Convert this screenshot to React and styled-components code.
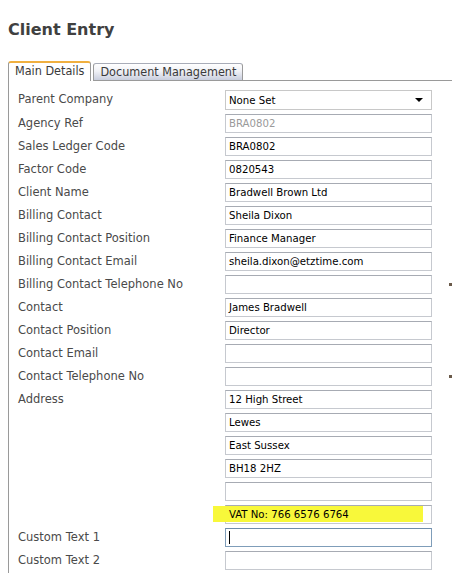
import React from "react";
import styled, { createGlobalStyle } from "styled-components";

const Global = createGlobalStyle`
  html, body { margin: 0; padding: 0; background: #fff; }
  body { width: 452px; height: 573px; overflow: hidden; }
`;

const fields = [
  { label: "Parent Company", select: "None Set" },
  { label: "Agency Ref", value: "BRA0802", disabled: true },
  { label: "Sales Ledger Code", value: "BRA0802" },
  { label: "Factor Code", value: "0820543" },
  { label: "Client Name", value: "Bradwell Brown Ltd" },
  { label: "Billing Contact", value: "Sheila Dixon" },
  { label: "Billing Contact Position", value: "Finance Manager" },
  { label: "Billing Contact Email", value: "sheila.dixon@etztime.com" },
  { label: "Billing Contact Telephone No", value: "", mark: true },
  { label: "Contact", value: "James Bradwell" },
  { label: "Contact Position", value: "Director" },
  { label: "Contact Email", value: "" },
  { label: "Contact Telephone No", value: "", mark: true },
];

const address = ["12 High Street", "Lewes", "East Sussex", "BH18 2HZ", ""];

const ClientEntry = () => {
  return (
    <Page>
      <Global />
      <Title>Client Entry</Title>
      <Tabs>
        <Tab active>Main Details</Tab>
        <Tab>Document Management</Tab>
        <TabFill />
      </Tabs>
      <Panel>
        <Form>
          {fields.map((f) => (
            <React.Fragment key={f.label}>
              <Label>{f.label}</Label>
              <Cell>
                {f.select ? (
                  <Select>
                    <span>{f.select}</span>
                    <Arrow />
                  </Select>
                ) : (
                  <Input disabled={f.disabled}>{f.value}</Input>
                )}
                {f.mark && <EdgeMark />}
              </Cell>
            </React.Fragment>
          ))}
          <Label top>Address</Label>
          <Stack>
            {address.map((a, i) => (
              <Input key={i}>{a}</Input>
            ))}
            <Input>
              <Highlight />
              <HighlightText>VAT No: 766 6576 6764</HighlightText>
            </Input>
          </Stack>
          <Label>Custom Text 1</Label>
          <Cell>
            <Input focused>
              <Caret />
            </Input>
          </Cell>
          <Label>Custom Text 2</Label>
          <Cell>
            <Input />
          </Cell>
        </Form>
      </Panel>
    </Page>
  );
};

export default ClientEntry;

const Page = styled.div`
  padding: 20px 0 0 8px;
  font-family: "DejaVu Sans", Verdana, sans-serif;
`;

const Title = styled.h1`
  margin: 0;
  font-size: 16px;
  line-height: 20px;
  font-weight: bold;
  color: #404040;
`;

const Tabs = styled.div`
  display: flex;
  align-items: flex-end;
  margin-top: 21px;
  height: 20px;
`;

const Tab = styled.div`
  box-sizing: border-box;
  height: ${(p) => (p.active ? "20px" : "18px")};
  padding: 0 ${(p) => (p.active ? "6px" : "6px")};
  margin-right: 2px;
  border: 1px solid #9a9a9a;
  border-top: ${(p) => (p.active ? "2px solid #f0b040" : "1px solid #a8acb8")};
  border-bottom: ${(p) => (p.active ? "none" : "1px solid #9a9a9a")};
  border-radius: 3px 3px 0 0;
  background: ${(p) =>
    p.active ? "#fff" : "linear-gradient(#ffffff, #f0f1f6 45%, #c9cede)"};
  font-family: "DejaVu Sans Condensed", "DejaVu Sans", sans-serif;
  font-size: 12.5px;
  line-height: 16px;
  color: #3a3a3a;
  white-space: nowrap;
`;

const TabFill = styled.div`
  flex: 1;
  border-bottom: 1px solid #9a9a9a;
  height: 0;
  margin-left: -2px;
`;

const Panel = styled.div`
  border-left: 1px solid #9a9a9a;
  padding: 9px 0 0 9px;
  height: 500px;
`;

const Form = styled.div`
  display: grid;
  grid-template-columns: 207px 207px;
  row-gap: 4px;
  align-items: center;
`;

const Label = styled.div`
  align-self: ${(p) => (p.top ? "start" : "center")};
  padding-top: ${(p) => (p.top ? "2px" : "0")};
  margin-top: ${(p) => (p.top ? "0" : "-2px")};
  font-size: 11.5px;
  color: #4a4a4a;
  white-space: nowrap;
`;

const Cell = styled.div`
  position: relative;
`;

const Stack = styled.div`
  display: flex;
  flex-direction: column;
  gap: 4px;
`;

const Input = styled.div`
  position: relative;
  box-sizing: border-box;
  height: 19px;
  width: 207px;
  padding: 0 3px;
  border: 1px solid ${(p) => (p.focused ? "#7f9db9" : "#c6c9cf")};
  border-top-color: ${(p) => (p.focused ? "#6f8dab" : "#a7abb3")};
  background: #fff;
  font-family: "DejaVu Sans Condensed", "DejaVu Sans", sans-serif;
  font-size: 11.3px;
  line-height: 17px;
  color: ${(p) => (p.disabled ? "#9a9a9a" : "#000")};
`;

const Select = styled(Input)`
  display: flex;
  align-items: center;
  justify-content: space-between;
  height: 20px;
  border-color: #c8c8c8;
  padding-right: 8px;
`;

const Arrow = styled.span`
  width: 0;
  height: 0;
  border-left: 4px solid transparent;
  border-right: 4px solid transparent;
  border-top: 4px solid #000;
`;

const EdgeMark = styled.span`
  position: absolute;
  left: 224px;
  top: 8px;
  width: 3px;
  height: 3px;
  background: #6a5a4a;
`;

const Highlight = styled.span`
  position: absolute;
  left: -13px;
  top: 0;
  width: 210px;
  height: 16px;
  background: #f8f83a;
`;

const HighlightText = styled.span`
  position: relative;
`;

const Caret = styled.span`
  display: inline-block;
  width: 1px;
  height: 13px;
  margin-top: 2px;
  background: #000;
`;
